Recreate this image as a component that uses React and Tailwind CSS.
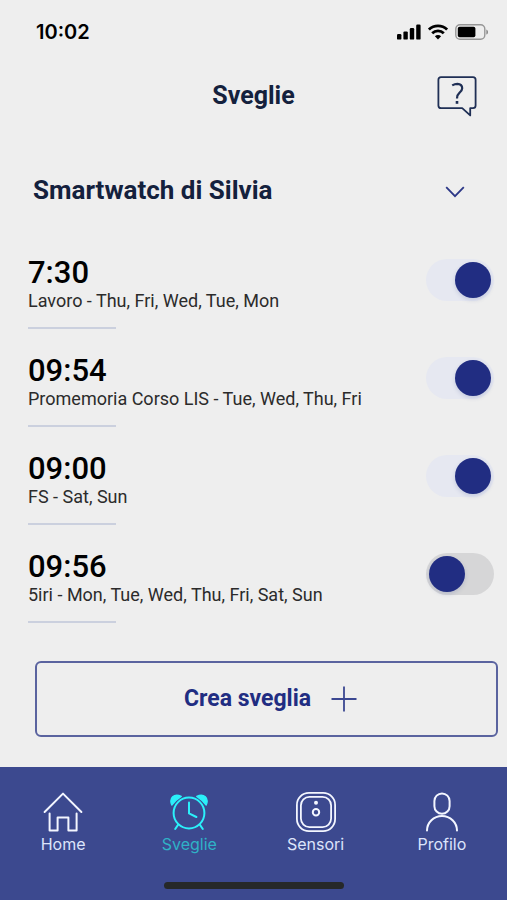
import { useState } from 'react';
import clsx from 'clsx';

const initialAlarms = [
  { id: 1, time: '7:30', name: 'Lavoro', days: ['Thu', 'Fri', 'Wed', 'Tue', 'Mon'], enabled: true },
  { id: 2, time: '09:54', name: 'Promemoria Corso LIS', days: ['Tue', 'Wed', 'Thu', 'Fri'], enabled: true },
  { id: 3, time: '09:00', name: 'FS', days: ['Sat', 'Sun'], enabled: true },
  { id: 4, time: '09:56', name: '5iri', days: ['Mon', 'Tue', 'Wed', 'Thu', 'Fri', 'Sat', 'Sun'], enabled: false },
];

const SignalIcon = () => (
  <svg width="24" height="16" viewBox="0 0 24 16" fill="#000" aria-hidden="true">
    <rect x="0" y="10" width="4.4" height="5.6" rx="1.2" />
    <rect x="6.4" y="7.4" width="4.4" height="8.2" rx="1.2" />
    <rect x="12.8" y="4" width="4.4" height="11.6" rx="1.2" />
    <rect x="19.2" y="0.6" width="4.4" height="15" rx="1.2" />
  </svg>
);

const WifiIcon = () => (
  <svg width="20" height="16" viewBox="0 0 20 16" fill="none" stroke="#000" strokeWidth="2.8" aria-hidden="true">
    <path d="M0.9 5.6A13 13 0 0 1 19.1 5.6" />
    <path d="M4.2 9.3A8.3 8.3 0 0 1 15.8 9.3" />
    <path d="M10 15.4L6.9 12.2A4.4 4.4 0 0 1 13.1 12.2Z" fill="#000" stroke="none" />
  </svg>
);

const BatteryIcon = () => (
  <svg width="34" height="16" viewBox="0 0 34 16" aria-hidden="true">
    <rect x="0.8" y="0.8" width="29" height="14.4" rx="4.2" fill="none" stroke="#969696" strokeWidth="1.4" />
    <rect x="2.8" y="2.8" width="17.6" height="10.4" rx="1.8" fill="#000" />
    <path d="M31.3 5.4C33.6 6.2 33.6 9.8 31.3 10.6Z" fill="#8a8a8a" />
  </svg>
);

const HelpIcon = () => (
  <svg width="40" height="41" viewBox="0 0 40 41" fill="none" stroke="#1f2f55" strokeLinejoin="round" aria-hidden="true">
    <path d="M4 1.2H36Q38.6 1.2 38.6 3.8V29.6Q38.6 32.2 36 32.2H33.2V39.4L25.2 32.2H4Q1.4 32.2 1.4 29.6V3.8Q1.4 1.2 4 1.2Z" strokeWidth="1.8" />
    <path d="M15.2 9.4Q17.8 7.8 20.4 7.8Q25.2 8 25.2 12.2Q25.2 14.6 22.4 16.8Q20 18.8 20 22.4" strokeWidth="2.2" />
    <path d="M20 25V27.8" strokeWidth="2.6" />
  </svg>
);

const HomeIcon = () => (
  <svg width="40" height="40" viewBox="0 0 40 40" fill="none" stroke="currentColor" strokeWidth="2" strokeLinejoin="round" strokeLinecap="round" aria-hidden="true">
    <path d="M1.6 20L20 1.6L38.4 20" />
    <path d="M6.6 21.5V38.4H14.6V25.6H25.4V38.4H33.6V21.5" />
  </svg>
);

const AlarmIcon = () => (
  <svg width="40" height="40" viewBox="0 0 40 40" fill="none" stroke="currentColor" strokeWidth="2" strokeLinecap="round" strokeLinejoin="round" aria-hidden="true">
    <circle cx="20" cy="21" r="15.4" />
    <path d="M20 10.6V21.4L27.4 25" />
    <path d="M9.2 32.6L6.2 37M30.8 32.6L33.8 37" />
    <path d="M2.8 13C-0.2 6.4 5 0.8 12.2 4.4Q6.8 7.8 2.8 13Z" fill="currentColor" strokeWidth="1.4" />
    <path d="M37.2 13C40.2 6.4 35 0.8 27.8 4.4Q33.2 7.8 37.2 13Z" fill="currentColor" strokeWidth="1.4" />
  </svg>
);

const SensorIcon = () => (
  <svg width="40" height="40" viewBox="0 0 40 40" fill="none" stroke="currentColor" aria-hidden="true">
    <rect x="0.9" y="0.9" width="38.2" height="38.2" rx="12" strokeWidth="1.8" />
    <rect x="4.9" y="4.9" width="30.2" height="30.2" rx="8.5" strokeWidth="1.8" />
    <circle cx="20" cy="10.8" r="2" fill="currentColor" stroke="none" />
    <circle cx="20" cy="20.2" r="3.2" strokeWidth="2" />
  </svg>
);

const ProfileIcon = () => (
  <svg width="40" height="40" viewBox="0 0 40 40" fill="none" stroke="currentColor" strokeWidth="2" strokeLinecap="round" aria-hidden="true">
    <rect x="12.4" y="1.4" width="15.2" height="20.4" rx="7.6" />
    <path d="M5 38.6A15 14.6 0 0 1 35 38.6" />
  </svg>
);

const tabs = [
  { id: 'home', label: 'Home', icon: HomeIcon },
  { id: 'sveglie', label: 'Sveglie', icon: AlarmIcon },
  { id: 'sensori', label: 'Sensori', icon: SensorIcon },
  { id: 'profilo', label: 'Profilo', icon: ProfileIcon },
];

const StatusBar = () => (
  <div className="flex h-16 items-center justify-between pr-[18px] pl-9 font-['Inter',sans-serif]">
    <span className="text-xl font-semibold text-black">10:02</span>
    <div className="flex items-center gap-[7px]">
      <SignalIcon />
      <WifiIcon />
      <BatteryIcon />
    </div>
  </div>
);

const Toggle = ({ id, checked, onChange }) => (
  <input
    id={id}
    type="checkbox"
    role="switch"
    checked={checked}
    onChange={onChange}
    className="mt-1 h-[42px] w-[68px] shrink-0 cursor-pointer appearance-none rounded-full bg-[#d6d6d7] p-[3px] before:block before:size-9 before:rounded-full before:bg-[#212d82] before:shadow-[0_2px_4px_rgba(60,80,150,0.2)] checked:bg-[#e6e8f1] checked:before:ml-[26px]"
  />
);

const AlarmRow = ({ alarm, onToggle }) => (
  <li className="flex items-start justify-between pt-6">
    <label htmlFor={`alarm-${alarm.id}`} className="block">
      <span className="block text-[31px] leading-9 font-medium text-black">{alarm.time}</span>
      <span className="block text-lg leading-5 text-[#2b2b2b]">
        {alarm.name} - {alarm.days.join(', ')}
      </span>
      <span className="mt-4 block h-0.5 w-[88px] bg-[#cbd0de]" />
    </label>
    <Toggle id={`alarm-${alarm.id}`} checked={alarm.enabled} onChange={() => onToggle(alarm.id)} />
  </li>
);

const App = () => {
  const [alarms, setAlarms] = useState(initialAlarms);
  const [activeTab, setActiveTab] = useState('sveglie');

  const toggleAlarm = (id) => {
    setAlarms(alarms.map(a => (a.id === id ? { ...a, enabled: !a.enabled } : a)));
  };

  return (
    <div className="flex min-h-screen flex-col bg-[#eeeeee] font-['Roboto',sans-serif]">
      <StatusBar />

      {/* Header */}
      <header className="grid h-16 grid-cols-[1fr_auto_1fr] items-center px-[30px]">
        <h1 className="col-start-2 text-[25px] font-bold text-[#14213d]">Sveglie</h1>
        <button type="button" aria-label="Aiuto" className="cursor-pointer justify-self-end">
          <HelpIcon />
        </button>
      </header>

      <main className="flex flex-col pb-[30px]">
        {/* Device */}
        <div className="relative mt-[30px] flex h-16 items-center pr-10 pl-[33px]">
          <select
            aria-label="Dispositivo"
            className="w-full cursor-pointer appearance-none bg-transparent text-[26px] font-bold text-[#14213d]"
          >
            <option>Smartwatch di Silvia</option>
          </select>
          <svg className="pointer-events-none absolute right-[42px]" width="20" height="16" viewBox="0 0 20 16" fill="none" stroke="#2c3787" strokeWidth="1.8" aria-hidden="true">
            <path d="M1.2 5.2L10 14.2L18.8 5.2" />
          </svg>
        </div>

        {/* Alarms */}
        <ul className="mt-[9px] pr-[13px] pl-7">
          {alarms.map(alarm => (
            <AlarmRow key={alarm.id} alarm={alarm} onToggle={toggleAlarm} />
          ))}
        </ul>

        <button
          type="button"
          className="mt-[38px] mr-[9px] ml-[35px] flex h-[76px] cursor-pointer items-center justify-center gap-5 rounded-md border-2 border-[#5a639f] pl-2 text-[23px] font-bold text-[#212d82]"
        >
          Crea sveglia
          <svg width="26" height="26" viewBox="0 0 26 26" stroke="#3b4791" strokeWidth="1.8" aria-hidden="true">
            <path d="M13 0.5V25.5M0.5 13H25.5" />
          </svg>
        </button>
      </main>

      {/* Bottom navigation */}
      <nav className="mt-auto flex flex-col items-center bg-[#3c498f] pt-[25px] pb-[11px] font-['Inter',sans-serif]">
        <div className="flex w-full pr-0.5">
          {tabs.map(({ id, label, icon: Icon }) => (
            <button
              key={id}
              type="button"
              onClick={() => setActiveTab(id)}
              className={clsx(
                'flex flex-1 cursor-pointer flex-col items-center gap-0.5',
                activeTab === id ? 'text-[#2bf0fa]' : 'text-[#f3f6ff]'
              )}
            >
              <Icon />
              <span className={clsx('text-base leading-5', activeTab === id ? 'text-[#2fb2c6]' : 'text-[#dce4fb]')}>
                {label}
              </span>
            </button>
          ))}
        </div>
        <div className="mt-7 h-[7px] w-[180px] rounded-full bg-[#262828]" />
      </nav>
    </div>
  );
};

export default App;
